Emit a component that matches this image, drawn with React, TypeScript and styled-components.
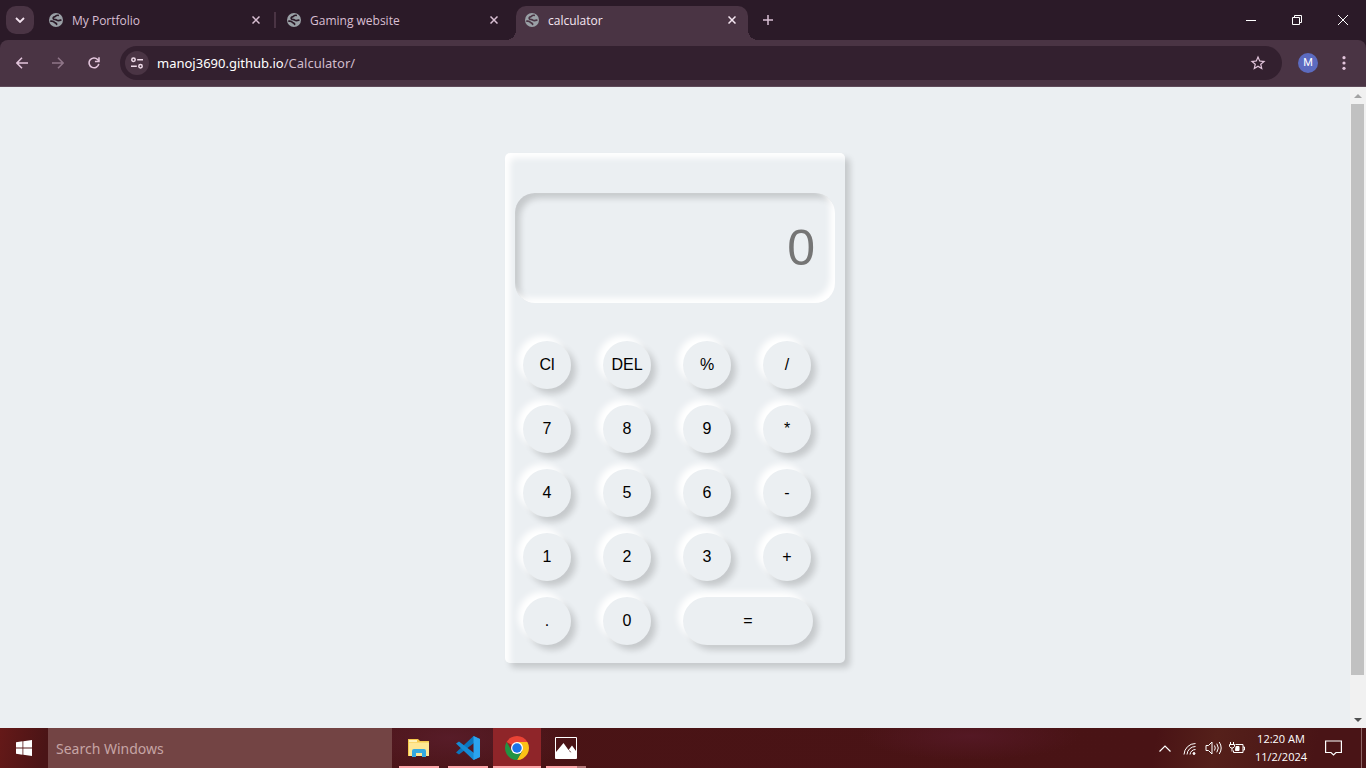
import React, { useState } from "react";
import styled, { createGlobalStyle, css } from "styled-components";

const ui = `"Open Sans", "Noto Sans", sans-serif`;

const GlobalStyle = createGlobalStyle`
  *, *::before, *::after { box-sizing: border-box; }
  body { margin: 0; overflow: hidden; }
  button, input { font: inherit; border: 0; margin: 0; padding: 0; background: none; color: inherit; }
  button:focus-visible, input:focus-visible { outline: none; }
  svg { display: block; flex: none; }
`;

const Screen = styled.div`
  display: flex;
  flex-direction: column;
  height: 100vh;
  font-family: ${ui};
  background: #2b1a28;
`;

const TabStrip = styled.header`
  display: flex;
  align-items: stretch;
  height: 40px;
  flex: none;
  color: #d9bfd3;
`;

const TabSearch = styled.button`
  width: 28px;
  height: 28px;
  margin: 6px;
  border-radius: 10px;
  background: #4a3444;
  display: grid;
  place-items: center;
  color: #f3e3ef;
`;

const Tabs = styled.div`
  display: flex;
  gap: 6px;
`;

const TabItem = styled.div<{ $active?: boolean; $divider?: boolean }>`
  position: relative;
  display: flex;
  align-items: center;
  width: 232px;
  height: 34px;
  margin-top: 6px;
  padding: 0 10px 6px 9px;
  font-size: 12px;
  line-height: 16px;
  ${(p) =>
    p.$active &&
    css`
      background: #4a3444;
      color: #f5e6f1;
      border-radius: 10px 10px 0 0;
      &::before,
      &::after {
        content: "";
        position: absolute;
        bottom: 0;
        width: 10px;
        height: 10px;
      }
      &::before {
        right: 100%;
        background: radial-gradient(circle at 0 0, transparent 10px, #4a3444 10px);
      }
      &::after {
        left: 100%;
        background: radial-gradient(circle at 100% 0, transparent 10px, #4a3444 10px);
      }
    `}
  ${(p) =>
    p.$divider &&
    css`
      &::after {
        content: "";
        position: absolute;
        left: 234px;
        top: 6px;
        width: 2px;
        height: 16px;
        background: #4a3444;
      }
    `}
`;

const TabTitle = styled.span`
  flex: 1;
  margin-left: 9px;
  padding-top: 1px;
  white-space: nowrap;
`;

const TabClose = styled.button`
  width: 12px;
  height: 12px;
  display: grid;
  place-items: center;
`;

const NewTab = styled.button`
  width: 28px;
  height: 28px;
  margin: 6px;
  display: grid;
  place-items: center;
`;

const WindowControls = styled.div`
  display: flex;
  margin-left: auto;
  color: #fff;
`;

const WindowButton = styled.button`
  width: 46px;
  height: 40px;
  display: grid;
  place-items: center;
`;

const Toolbar = styled.nav`
  display: flex;
  align-items: center;
  flex: none;
  height: 47px;
  padding: 0 4px;
  background: #4a3444;
  border-bottom: 1px solid #5e4a59;
  border-radius: 8px 8px 0 0;
  color: #e3c5dc;
`;

const ToolButton = styled.button<{ $dim?: boolean }>`
  width: 36px;
  height: 36px;
  display: grid;
  place-items: center;
  opacity: ${(p) => (p.$dim ? 0.45 : 1)};
`;

const Omnibox = styled.div`
  display: flex;
  align-items: center;
  flex: 1;
  height: 34px;
  margin: 0 8px;
  padding: 0 15px 0 5px;
  border-radius: 17px;
  background: #33202f;
`;

const SiteInfo = styled.button`
  width: 24px;
  height: 24px;
  border-radius: 12px;
  background: #4a3444;
  display: grid;
  place-items: center;
  color: #f0dcea;
`;

const Address = styled.span`
  flex: 1;
  margin-left: 8px;
  font-family: "Noto Sans", sans-serif;
  font-size: 13px;
  line-height: 20px;
  color: #d0bccb;
  white-space: nowrap;
  b {
    font-weight: 400;
    color: #fff;
  }
`;

const Profile = styled.button`
  width: 20px;
  height: 20px;
  margin: 0 8px;
  border-radius: 10px;
  background: #5c6bc0;
  color: #fff;
  font: 11px/20px Roboto, sans-serif;
`;

const Viewport = styled.div`
  display: flex;
  flex: 1;
  min-height: 0;
`;

const Page = styled.main`
  flex: 1;
  overflow: hidden;
  padding-top: 66px;
  background: #ebeff2;
  font-family: "Liberation Sans", Arial, sans-serif;
`;

const Calculator = styled.section`
  width: 340px;
  margin: 0 auto;
  padding: 40px 10px 18px;
  border-radius: 5px;
  background: #ebeff2;
  box-shadow: inset 5px 5px 6px #fff, 5px 5px 6px rgba(0, 0, 0, 0.16);
`;

const Display = styled.input`
  display: block;
  width: 100%;
  height: 110px;
  padding: 0 20px;
  border-radius: 20px;
  background: #ebeff2;
  box-shadow: inset -5px -5px 6px #fff, inset 5px 5px 6px rgba(0, 0, 0, 0.16);
  font-size: 50px;
  text-align: right;
  &::placeholder {
    color: #757575;
    opacity: 1;
  }
`;

const Keys = styled.div`
  display: grid;
  grid-template-columns: repeat(4, 48px);
  gap: 16px 32px;
  margin: 38px 0 0 8px;
`;

const Key = styled.button<{ $wide?: boolean }>`
  width: ${(p) => (p.$wide ? 130 : 48)}px;
  height: 48px;
  grid-column: span ${(p) => (p.$wide ? 2 : 1)};
  border-radius: 24px;
  background: #ebeff2;
  color: #000;
  font-size: 16px;
  white-space: nowrap;
  box-shadow: -5px -5px 6px #fff, 5px 5px 6px rgba(0, 0, 0, 0.16);
`;

const Scrollbar = styled.div`
  display: flex;
  flex-direction: column;
  align-items: center;
  width: 16px;
  padding-right: 1px;
  background: #f1f1f1;
`;

const ScrollArrow = styled.div`
  height: 17px;
  display: grid;
  place-items: center;
`;

const ScrollTrack = styled.div`
  flex: 1;
  width: 13px;
`;

const ScrollThumb = styled.div`
  height: 94%;
  background: #c1c1c1;
`;

const Taskbar = styled.footer`
  display: flex;
  align-items: stretch;
  flex: none;
  height: 40px;
  color: #fff;
  background: radial-gradient(ellipse 120px 40px at 450px 10px, #571c28, transparent),
    radial-gradient(ellipse 110px 24px at 970px 8px, #541824, transparent),
    linear-gradient(100deg, #651918, #4a1416 48px, #491315 1140px, #55201a 1200px, #491416 1300px);
`;

const Start = styled.button`
  width: 48px;
  display: grid;
  place-items: center;
`;

const Search = styled.input`
  width: 344px;
  padding: 0 8px;
  background: #734444;
  font-family: "Noto Sans", sans-serif;
  font-size: 14px;
  &::placeholder {
    color: #c6a5a5;
    opacity: 1;
  }
`;

const Apps = styled.div`
  display: flex;
  gap: 1px;
  margin-left: 3px;
`;

const AppButton = styled.button<{ $active?: boolean }>`
  display: flex;
  flex-direction: column;
  align-items: center;
  justify-content: space-between;
  width: 48px;
  padding-top: 8px;
  background: ${(p) => (p.$active ? "#8f2529" : "none")};
`;

const Underline = styled.span<{ $full?: boolean; $stacked?: boolean }>`
  width: ${(p) => (p.$full ? 48 : 40)}px;
  height: 2px;
  background: ${(p) =>
    p.$stacked ? "linear-gradient(90deg, #fca5a8 31px, #b57778 31px)" : "#fca5a8"};
`;

const Tray = styled.div`
  display: flex;
  align-items: center;
  margin-left: auto;
`;

const TrayButton = styled.button<{ $w?: number }>`
  width: ${(p) => p.$w ?? 24}px;
  height: 40px;
  display: grid;
  place-items: center;
`;

const Clock = styled.button`
  width: 64px;
  font-size: 11px;
  line-height: 18px;
  white-space: nowrap;
  display: flex;
  flex-direction: column;
  align-items: center;
`;

const ShowDesktop = styled.button`
  width: 5px;
  height: 40px;
  margin-left: 8px;
  border-left: 1px solid #8d6565;
`;

const Globe = ({ ink }: { ink: string }) => (
  <svg width="14" height="14" viewBox="0 0 14 14" aria-hidden="true">
    <circle cx="7" cy="7" r="7" fill="#9aa0a6" />
    <g fill="none" stroke={ink} strokeWidth="1.7" strokeLinecap="round">
      <path d="M9.200 2.300C6.800 2 6.800 3.500 5.200 3.900 3.600 4.500 3.900 6.200 5.600 6.300 8 6.300 7.600 7.700 9.400 7.600L11.800 7.200" />
      <path d="M1.900 8.100C4.200 7.800 5 8.500 5.800 9.700 6.500 10.300 7.800 10 7.600 11.400" />
    </g>
  </svg>
);

const Cross = () => (
  <svg width="8" height="8" viewBox="0 0 8 8" stroke="currentColor" strokeWidth="1.500">
    <path d="M.5.5l7 7M7.500.5l-7 7" />
  </svg>
);

const tabs = ["My Portfolio", "Gaming website", "calculator"];
const keys = ["Cl", "DEL", "%", "/", "7", "8", "9", "*", "4", "5", "6", "-", "1", "2", "3", "+", ".", "0", "="];

export default function App() {
  const [value, setValue] = useState("");

  const press = (key: string) => {
    if (key === "Cl") setValue("");
    else if (key === "DEL") setValue((v) => v.slice(0, -1));
    else if (key === "=") {
      try {
        setValue(String(new Function(`return ${value || 0}`)()));
      } catch {
        setValue("Error");
      }
    } else setValue((v) => v + key);
  };

  return (
    <Screen>
      <GlobalStyle />
      <TabStrip>
        <TabSearch aria-label="Search tabs">
          <svg width="10" height="6" viewBox="0 0 10 6" fill="none" stroke="currentColor" strokeWidth="1.8">
            <path d="M1 1l4 4 4-4" />
          </svg>
        </TabSearch>
        <Tabs>
          {tabs.map((title, i) => (
            <TabItem key={title} $active={i === 2} $divider={i === 0}>
              <Globe ink={i === 2 ? "#4a3444" : "#2b1a28"} />
              <TabTitle>{title}</TabTitle>
              <TabClose aria-label={`Close ${title}`}>
                <Cross />
              </TabClose>
            </TabItem>
          ))}
        </Tabs>
        <NewTab aria-label="New tab">
          <svg width="10" height="10" viewBox="0 0 10 10" stroke="currentColor" strokeWidth="1.5">
            <path d="M5 0v10M0 5h10" />
          </svg>
        </NewTab>
        <WindowControls>
          <WindowButton aria-label="Minimize">
            <svg width="10" height="1" viewBox="0 0 10 1">
              <path d="M0 0h10v1H0z" fill="currentColor" />
            </svg>
          </WindowButton>
          <WindowButton aria-label="Restore">
            <svg width="10" height="10" viewBox="0 0 10 10" fill="none" stroke="currentColor">
              <path d="M.5 2.5h7v7h-7zM2.5 2.5v-2h7v7h-2" />
            </svg>
          </WindowButton>
          <WindowButton aria-label="Close">
            <svg width="10" height="10" viewBox="0 0 10 10" stroke="currentColor">
              <path d="M0 0l10 10M10 0L0 10" />
            </svg>
          </WindowButton>
        </WindowControls>
      </TabStrip>

      <Toolbar>
        <ToolButton aria-label="Back">
          <svg width="12" height="12" viewBox="0 0 12 12" fill="none" stroke="currentColor" strokeWidth="1.5">
            <path d="M6 .7L.9 6 6 11.300M1 6h11" />
          </svg>
        </ToolButton>
        <ToolButton aria-label="Forward" $dim>
          <svg width="12" height="12" viewBox="0 0 12 12" fill="none" stroke="currentColor" strokeWidth="1.5">
            <path d="M6 .7L11.100 6 6 11.300M0 6h11" />
          </svg>
        </ToolButton>
        <ToolButton aria-label="Reload">
          <svg width="12" height="12" viewBox="0 0 13 13" fill="none" stroke="currentColor" strokeWidth="1.7">
            <path d="M11.700 7.400A5.300 5.300 0 1 1 10.400 2.800L11.800 4.300" />
            <path d="M11.900.4v4.500H7.500" />
          </svg>
        </ToolButton>
        <Omnibox>
          <SiteInfo aria-label="View site information">
            <svg width="12" height="12" viewBox="0 0 12 12" fill="none" stroke="currentColor" strokeWidth="1.5">
              <circle cx="2.500" cy="2.800" r="1.700" />
              <path d="M6.200 2.800H12M0 9.200h5.800" />
              <circle cx="9.500" cy="9.200" r="1.700" />
            </svg>
          </SiteInfo>
          <Address>
            <b>manoj3690.github.io</b>/Calculator/
          </Address>
          <button aria-label="Bookmark this tab">
            <svg width="18" height="18" viewBox="0 0 24 24" fill="currentColor">
              <path d="M22 9.240l-7.190-.62L12 2 9.190 8.630 2 9.240l5.460 4.730L5.820 21 12 17.270 18.180 21l-1.630-7.030L22 9.240zM12 15.400l-3.760 2.270 1-4.280-3.320-2.880 4.380-.38L12 6.100l1.710 4.040 4.380.38-3.320 2.880 1 4.280L12 15.400z" />
            </svg>
          </button>
        </Omnibox>
        <Profile aria-label="Profile">M</Profile>
        <ToolButton aria-label="Menu">
          <svg width="4" height="14" viewBox="0 0 4 14" fill="currentColor">
            <circle cx="2" cy="1.700" r="1.600" />
            <circle cx="2" cy="7" r="1.600" />
            <circle cx="2" cy="12.300" r="1.600" />
          </svg>
        </ToolButton>
      </Toolbar>

      <Viewport>
        <Page>
          <Calculator>
            <Display aria-label="Result" placeholder="0" value={value} onChange={(e) => setValue(e.target.value)} />
            <Keys>
              {keys.map((k) => (
                <Key key={k} $wide={k === "="} onClick={() => press(k)}>
                  {k}
                </Key>
              ))}
            </Keys>
          </Calculator>
        </Page>
        <Scrollbar>
          <ScrollArrow>
            <svg width="8" height="4" viewBox="0 0 8 4">
              <path d="M0 4l4-4 4 4z" fill="#a3a3a3" />
            </svg>
          </ScrollArrow>
          <ScrollTrack>
            <ScrollThumb />
          </ScrollTrack>
          <ScrollArrow>
            <svg width="8" height="4" viewBox="0 0 8 4">
              <path d="M0 0l4 4 4-4z" fill="#505050" />
            </svg>
          </ScrollArrow>
        </Scrollbar>
      </Viewport>

      <Taskbar>
        <Start aria-label="Start">
          <svg width="16" height="16" viewBox="0 0 16 16" fill="#fff">
            <path d="M0 2.200l6.500-.9v6.300H0zM7.300 1.200L16 0v7.600H7.300zM0 8.400h6.500v6.300L0 13.800zM7.300 8.400H16V16l-8.700-1.200z" />
          </svg>
        </Start>
        <Search aria-label="Search Windows" placeholder="Search Windows" />
        <Apps>
          <AppButton aria-label="File Explorer">
            <svg width="24" height="24" viewBox="0 0 24 24">
              <path d="M1 3h10l2 2h9v15H1z" fill="#f6c94d" />
              <path d="M2 4h8v2H2z" fill="#fff2b8" />
              <path d="M2 6.500h20V20H2z" fill="#ffe794" />
              <path d="M5 21v-6q0-2 2-2h10q2 0 2 2v6h-4v-4H9v4z" fill="#35a9e0" />
            </svg>
            <Underline />
          </AppButton>
          <AppButton aria-label="Visual Studio Code">
            <svg width="24" height="24" viewBox="0 0 24 24">
              <path d="M17.500 0L24 3v5l-6-1L3 18.600 0 16.400z" fill="#0b75bd" />
              <path d="M0 7.600L3 5.400 18 17l6-1v5l-6.500 3z" fill="#168bd4" />
              <path d="M17.500 0L24 3v18l-6.500 3z" fill="#2ba4ee" />
            </svg>
            <Underline />
          </AppButton>
          <AppButton aria-label="Google Chrome" $active>
            <svg width="24" height="24" viewBox="0 0 48 48">
              <path d="M24 24L3.220 12A24 24 0 0 1 44.780 12z" fill="#ea4335" />
              <path d="M44.780 12A24 24 0 0 1 24 48L34.390 30 24 12z" fill="#fbc116" />
              <path d="M24 48A24 24 0 0 1 3.220 12L13.610 30 24 36l10.390-6z" fill="#229342" />
              <circle cx="24" cy="24" r="12" fill="#fff" />
              <circle cx="24" cy="24" r="9.500" fill="#1a73e8" />
            </svg>
            <Underline $full />
          </AppButton>
          <AppButton aria-label="Photos">
            <svg width="24" height="24" viewBox="0 0 24 24">
              <path d="M1.500 1.500h21v21h-21z" fill="none" stroke="#fff" />
              <path d="M2 16l7.500-9 5 7 3.500-4.500L22 15v7H2z" fill="#fff" />
              <path d="M14.500 13.500l3 3-1.500-.5z" fill="#4a1416" />
            </svg>
            <Underline $stacked />
          </AppButton>
        </Apps>
        <Tray>
          <TrayButton aria-label="Show hidden icons">
            <svg width="12" height="7" viewBox="0 0 12 7" fill="none" stroke="#fff" strokeWidth="1.200">
              <path d="M.5 6.500L6 1l5.500 5.500" />
            </svg>
          </TrayButton>
          <TrayButton aria-label="Network">
            <svg width="13" height="13" viewBox="0 0 13 13" fill="none" stroke="#fff">
              <path d="M1 12.500A11.500 11.500 0 0 1 12.500 1.500M4 12.500a8.500 8.500 0 0 1 8.500-8M7 12.500a5.500 5.500 0 0 1 5.500-5" />
              <circle cx="11" cy="11.500" r="1" fill="#fff" />
            </svg>
          </TrayButton>
          <TrayButton aria-label="Volume">
            <svg width="17" height="14" viewBox="0 0 17 14" fill="none" stroke="#fff">
              <path d="M1 4.500h2.500L7 1v12L3.500 9.500H1z" />
              <path d="M9.500 4.500q1.500 2.500 0 5M11.800 2.700q3 4.300 0 8.600M14.200 1q4 6 0 12" />
            </svg>
          </TrayButton>
          <TrayButton aria-label="Battery">
            <svg width="16" height="12" viewBox="0 0 16 12" fill="none" stroke="#fff">
              <path d="M6.500 2.500h7.500v8H4.500v-2M14 5h1.500v3H14" />
              <path d="M7 4.500h3v4H6.500z" fill="#fff" />
              <path d="M1.500 0v2.500M4.500 0v2.500M.5 2.500h5v2l-1.500 1.500H2L.5 4.500zM3 6v3.500" />
            </svg>
          </TrayButton>
          <Clock>
            <span>12:20 AM</span>
            <span>11/2/2024</span>
          </Clock>
          <TrayButton aria-label="Notifications" $w={40}>
            <svg width="17" height="16" viewBox="0 0 17 16" fill="none" stroke="#fff" strokeWidth="1.200">
              <path d="M.6 1h15.800v11.500H11L8.500 15 6 12.500H.6z" />
            </svg>
          </TrayButton>
          <ShowDesktop aria-label="Show desktop" />
        </Tray>
      </Taskbar>
    </Screen>
  );
}
